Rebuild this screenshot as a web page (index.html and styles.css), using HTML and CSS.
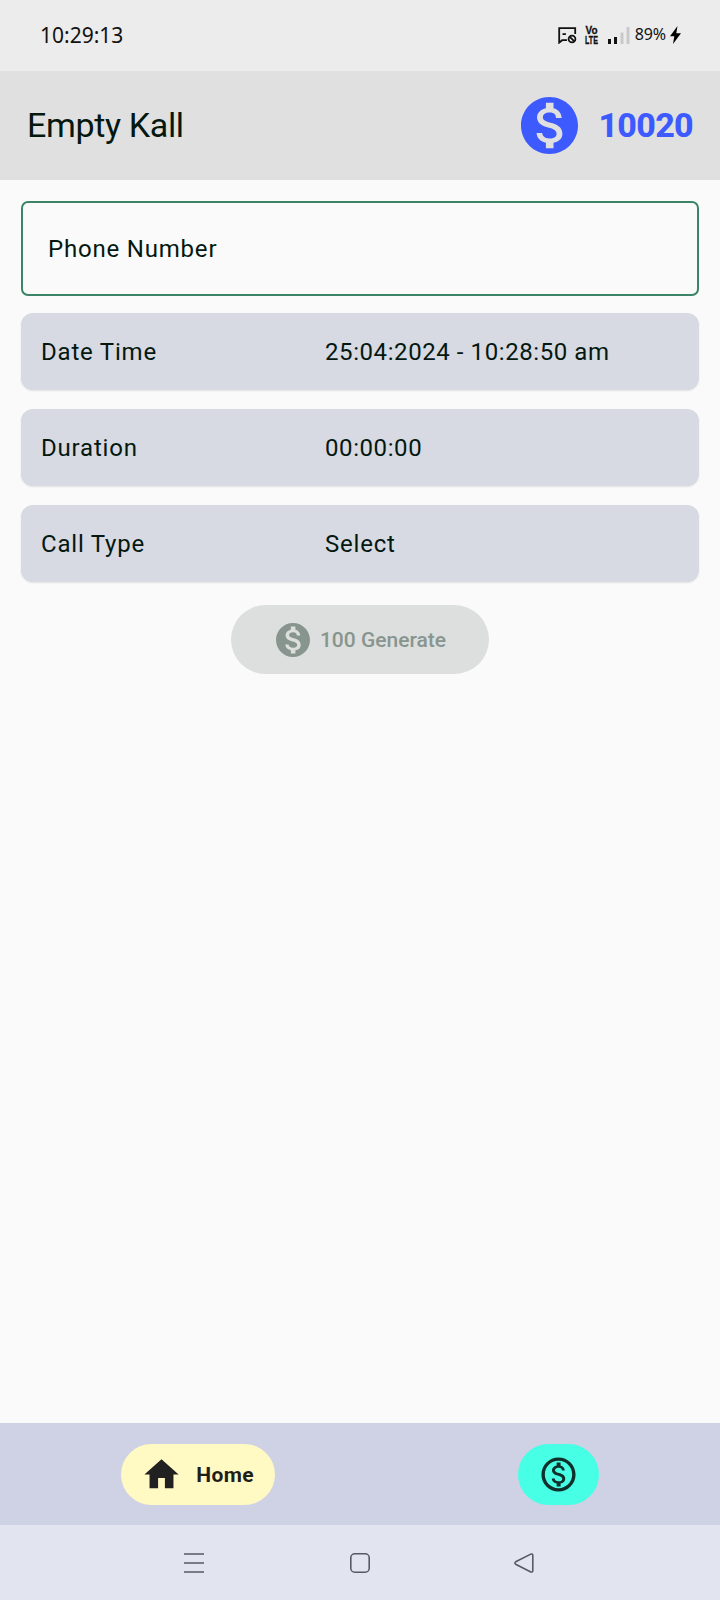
FILE: index.html
```html
<!DOCTYPE html>
<html lang="en">
<head>
  <meta charset="UTF-8">
  <meta name="viewport" content="width=device-width, initial-scale=1.0">
  <title>Empty Kall</title>
  <link rel="stylesheet" href="styles.css">
</head>
<body>
  <svg class="defs" xmlns="http://www.w3.org/2000/svg">
    <symbol id="coin" viewBox="2 2 20 20"><path d="M12 2C6.48 2 2 6.48 2 12s4.48 10 10 10 10-4.48 10-10S17.52 2 12 2zm1.41 16.09V20h-2.67v-1.93c-1.71-.36-3.16-1.46-3.27-3.4h1.96c.1 1.05.82 1.87 2.65 1.87 1.96 0 2.4-.98 2.4-1.59 0-.83-.44-1.61-2.67-2.14-2.48-.6-4.18-1.62-4.18-3.67 0-1.72 1.39-2.84 3.11-3.21V4h2.67v1.95c1.86.45 2.79 1.86 2.85 3.39H14.3c-.05-1.11-.64-1.87-2.22-1.87-1.5 0-2.4.68-2.4 1.64 0 .84.65 1.39 2.67 1.91s4.18 1.39 4.18 3.91c-.01 1.83-1.38 2.83-3.12 3.16z"/></symbol>
  </svg>
  <div class="status-bar">
    <span class="clock">10:29:13</span>
    <div class="status-icons">
      <svg class="cast-icon" viewBox="0 0 19 17" fill="none" stroke="#111" stroke-width="1.8">
        <path d="M17.2 7V1.2H1.2v14.4l3-2.4H9M4.5 7.2h3.4"/>
        <circle cx="14" cy="12" r="3.4"/>
        <path d="M11.8 9.8l4.5 4.5"/>
      </svg>
      <svg class="volte" viewBox="0 0 13 18">
        <text x="0.5" y="8" textLength="12" lengthAdjust="spacingAndGlyphs">Vo</text>
        <text x="0" y="17.5" textLength="13" lengthAdjust="spacingAndGlyphs">LTE</text>
      </svg>
      <svg class="signal-icon" viewBox="0 0 22 17">
        <rect x="0" y="12" width="3" height="5" fill="#111"/>
        <rect x="6" y="10" width="3" height="7" fill="#111"/>
        <rect x="12.5" y="5.5" width="3" height="11.5" fill="#c9c9c9"/>
        <rect x="18.5" y="0" width="3" height="17" fill="#c9c9c9"/>
      </svg>
      <span class="battery">89%</span>
      <svg class="bolt-icon" viewBox="0 0 11 18"><path d="M7.5 0L0 10.2h4.3L3 18 11 7.2H6.3z"/></svg>
    </div>
  </div>
  <header class="header">
    <h1>Empty Kall</h1>
    <div class="coins">
      <svg><use href="#coin"/></svg>
      <span>10020</span>
    </div>
  </header>
  <main class="content">
    <div class="phone-field">Phone Number</div>
    <div class="card"><span>Date Time</span><span class="value">25:04:2024 - 10:28:50 am</span></div>
    <div class="card"><span>Duration</span><span class="value">00:00:00</span></div>
    <div class="card"><span>Call Type</span><span>Select</span></div>
    <button class="generate-button" disabled>
      <svg><use href="#coin"/></svg>
      <span>100 Generate</span>
    </button>
  </main>
  <nav class="tabs">
    <div class="tab tab-home">
      <svg viewBox="0 0 24 24"><path d="M10 20v-6h4v6h5v-8h3L12 3 2 12h3v8z"/></svg>
      <span>Home</span>
    </div>
    <div class="tab tab-coins">
      <svg viewBox="0 0 24 24"><path d="M12 2C6.48 2 2 6.48 2 12s4.48 10 10 10 10-4.48 10-10S17.52 2 12 2zm0 18c-4.41 0-8-3.59-8-8s3.59-8 8-8 8 3.59 8 8-3.59 8-8 8zm.31-8.86c-1.77-.45-2.34-.94-2.34-1.67 0-.84.79-1.43 2.1-1.43 1.38 0 1.9.66 1.94 1.64h1.71c-.05-1.34-.87-2.57-2.49-2.97V5H10.9v1.69c-1.51.32-2.72 1.3-2.72 2.81 0 1.79 1.49 2.69 3.66 3.21 1.95.46 2.34 1.15 2.34 1.87 0 .53-.39 1.39-2.1 1.39-1.6 0-2.23-.72-2.32-1.64H8.04c.1 1.7 1.36 2.66 2.86 2.97V19h2.34v-1.67c1.52-.29 2.72-1.16 2.73-2.77-.01-2.2-1.9-2.96-3.66-3.42z"/></svg>
    </div>
  </nav>
  <div class="system-nav">
    <svg viewBox="0 0 20 20"><path d="M0 1h20M0 10h20M0 19h20"/></svg>
    <svg viewBox="0 0 20 20"><rect x="0.8" y="0.8" width="18.4" height="18.4" rx="4"/></svg>
    <svg viewBox="0 0 20 20"><path d="M16.8 1.1L1.7 8.8Q0 10 1.7 11.2L16.8 18.9Q18.8 19.5 18.8 17.6V2.4Q18.8.5 16.8 1.1z"/></svg>
  </div>
</body>
</html>
```

FILE: styles.css
```css
* {
  box-sizing: border-box;
}
body {
  margin: 0;
  height: 1600px;
  display: flex;
  flex-direction: column;
  font-family: Roboto, sans-serif;
  background: #fafafa;
  color: #04180f;
  overflow: hidden;
}
svg {
  display: block;
  flex-shrink: 0;
}
.defs {
  display: none;
}
.status-bar {
  height: 71px;
  padding: 0 39px 2px 40px;
  display: flex;
  align-items: center;
  justify-content: space-between;
  background: #ececec;
  color: #111;
  font-family: "Noto Sans", sans-serif;
}
.clock {
  font-size: 21px;
}
.status-icons {
  display: flex;
  align-items: center;
}
.cast-icon {
  width: 19px;
  height: 17px;
  margin: 2px 8px 0 0;
}
.volte {
  width: 13px;
  height: 18px;
  margin: 1px 10px 0 0;
  overflow: visible;
  font: bold 11px "Liberation Sans", sans-serif;
  fill: #111;
  stroke: #111;
  stroke-width: 0.3px;
}
.signal-icon {
  width: 22px;
  height: 17px;
  margin: 1px 5px 0 0;
}
.battery {
  font-size: 16px;
  letter-spacing: -0.1px;
  margin: -1px 4px 0 0;
}
.bolt-icon {
  width: 11px;
  height: 18px;
  margin-top: 1px;
}
.header {
  height: 109px;
  padding: 0 27px;
  display: flex;
  align-items: center;
  justify-content: space-between;
  background: #e0e0e0;
}
.header h1 {
  margin: 0;
  padding-bottom: 2px;
  font-size: 34px;
  font-weight: 400;
  letter-spacing: -0.35px;
}
.coins {
  display: flex;
  align-items: center;
  gap: 20px;
  color: #3d5afe;
  font-size: 34px;
  font-weight: 800;
  letter-spacing: -0.7px;
}
.coins span {
  padding-bottom: 2px;
}
.coins svg {
  width: 57px;
  height: 57px;
  margin-bottom: 1px;
  fill: #3d5afe;
}
.content {
  flex: 1;
  padding: 21px 21px 0;
  display: flex;
  flex-direction: column;
  font-size: 24px;
  letter-spacing: 0.8px;
}
.phone-field {
  height: 95px;
  margin-bottom: 17px;
  padding: 0 25px;
  display: flex;
  align-items: center;
  border: 2px solid #3b8468;
  border-radius: 7px;
}
.card {
  height: 77px;
  margin-bottom: 19px;
  padding: 0 20px;
  display: grid;
  grid-template-columns: 284px 1fr;
  align-items: center;
  background: #d7d9e3;
  border-radius: 12px;
  box-shadow: 0 1px 2px rgba(0, 0, 0, 0.1);
}
.card .value {
  letter-spacing: 0.58px;
}
.generate-button {
  align-self: center;
  width: 258px;
  height: 69px;
  margin-top: 4px;
  padding: 0 0 0 2px;
  display: flex;
  align-items: center;
  justify-content: center;
  gap: 10px;
  border: none;
  border-radius: 35px;
  background: #dddfde;
  color: #88958f;
  font: 500 21px Roboto, sans-serif;
}
.generate-button svg {
  width: 34px;
  height: 34px;
  fill: #88958f;
}
.tabs {
  height: 102px;
  display: flex;
  align-items: center;
  justify-content: space-around;
  background: #cfd1e4;
}
.tab {
  height: 61px;
  padding: 0 20px;
  display: flex;
  align-items: center;
  gap: 14px;
  border-radius: 31px;
  font-size: 21px;
  font-weight: 700;
  letter-spacing: 0.4px;
  color: #1f1f1a;
}
.tab span {
  padding-top: 1px;
}
.tab svg {
  width: 41px;
  height: 41px;
  fill: #202120;
}
.tab-home {
  width: 154px;
  background: #fff9c4;
}
.tab-coins {
  width: 81px;
  background: #47ffe4;
}
.tab-coins svg {
  fill: #10302c;
}
.system-nav {
  height: 75px;
  padding-left: 184px;
  display: flex;
  align-items: center;
  gap: 146px;
  background: #e2e5ef;
}
.system-nav svg {
  width: 20px;
  height: 20px;
  fill: none;
  stroke: #565a64;
  stroke-width: 1.6;
}
.system-nav svg:last-child {
  margin-left: -2px;
}
```
